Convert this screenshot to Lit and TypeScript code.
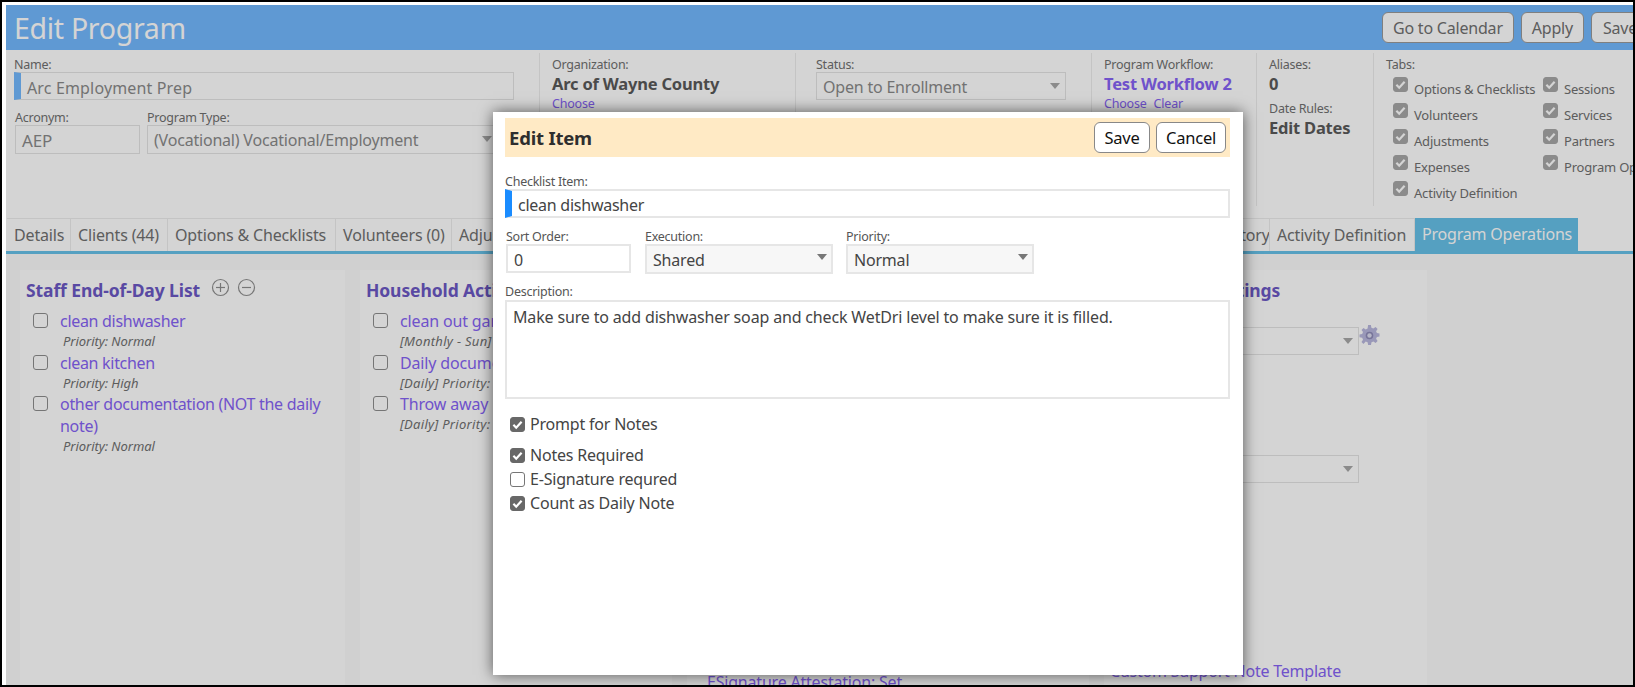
import { LitElement, html, css, svg } from 'lit';
import { customElement } from 'lit/decorators.js';

const box = (checked: boolean) => html`
    <span class="box ${checked ? 'on' : ''}">
        ${checked
            ? html`<svg viewBox="0 0 15 15" width="15" height="15"><path d="M3.4 7.8l2.8 2.9 5.4-6" fill="none" stroke="#fff" stroke-width="2.2"/></svg>`
            : ''}
    </span>
`;

const gear = svg`
    <path fill="#b9b7de" d="M8.6 0h2.8l.5 2.7 1.9.8L16.100 2l2 2-1.500 2.200.8 1.900 2.600.5v2.800l-2.600.5-.8 1.900 1.500 2.200-2 2-2.200-1.500-1.900.8-.5 2.700H8.600l-.5-2.700-1.900-.8L4 18.900l-2-2 1.500-2.200-.8-1.900-2.700-.5V9.500l2.700-.5.8-1.900L2 4.900l2-2 2.200 1.500 1.900-.8z"/>
    <circle cx="10" cy="10.500" r="3.800" fill="#8f8cb8"/>
    <circle cx="10" cy="10.500" r="2.200" fill="#dddcf0"/>
`;

const tabs = [
    ['Details', 64], ['Clients (44)', 97], ['Options & Checklists', 168], ['Volunteers (0)', 116],
    ['Adjustments (0)', 135], ['Expenses (0)', 115], ['Sessions (0)', 110], ['Services (0)', 105],
    ['Partners', 90], ['Documents (0)', 120], ['Billing', 83], ['History', 60], ['Activity Definition', 145],
] as const;

const headerTabs = [
    'Options & Checklists', 'Sessions', 'Volunteers', 'Services', 'Adjustments', 'Partners',
    'Expenses', 'Program Operations', 'Activity Definition',
];

@customElement('app-root')
export class AppRoot extends LitElement {
    static styles = css`
        :host {
            display: block;
            height: 687px;
            font-family: "Noto Sans", sans-serif;
            color: #707070;
        }
        * { box-sizing: border-box; }

        .frame {
            height: 687px;
            background: #fff;
            border: 2px solid #000;
            padding: 3px 0 0 4px;
        }
        .page {
            position: relative;
            height: 100%;
            overflow: hidden;
            background: #fff;
        }
        .scrim {
            position: absolute;
            inset: 0;
            background: rgba(0, 0, 0, .17);
        }

        .top {
            display: flex;
            align-items: center;
            height: 45px;
            padding: 0 0 0 8px;
            background: #73b8fe;
            overflow: hidden;
        }
        .top h1 {
            flex: 1;
            margin: 0;
            font-size: 28.500px;
            font-weight: 400;
            color: #fff;
            letter-spacing: -.3px;
        }
        .top button {
            flex: none;
            height: 31px;
            margin-left: 7px;
            padding: 0 10px;
            border: 1px solid #999;
            border-radius: 6px;
            background: #fff;
            color: #707070;
            font: 16px "Noto Sans", sans-serif;
            letter-spacing: -.2px;
        }
        .top .cut { margin-right: -16px; width: 58px; }

        .details {
            display: grid;
            grid-template-columns: 533px 256px 296px 165px 117px 1fr;
            height: 168px;
            padding: 3px 0 14px;
            font-size: 12.500px;
        }
        .col {
            padding: 4px 0 0 12px;
            border-left: 1px solid #ececec;
        }
        .col:first-child { padding-left: 8px; border-left: none; }
        .col.status { padding-left: 20px; }
        label {
            display: block;
            height: 15px;
            font-size: 12.500px;
            line-height: 15px;
            letter-spacing: -.25px;
        }
        .field {
            display: flex;
            align-items: center;
            height: 28px;
            border: 1px solid #e4e4e4;
            padding: 1px 0 0 6px;
            color: #8a8a8a;
            font-size: 16px;
            letter-spacing: -.2px;
            position: relative;
            white-space: nowrap;
        }
        .field.bar { border-left: 7px solid #73b8fe; padding: 3px 0 0 6px; font-size: 16px; letter-spacing: .15px; }
        .caret {
            position: absolute;
            right: 5px;
            top: 10px;
            border: 5px solid transparent;
            border-top: 6px solid #a8a8a8;
            border-bottom: none;
        }
        .sub-row { display: flex; gap: 7px; margin: 10px 0 0 1px; }
        .sub-row .field { height: 29px; }
        .field.acronym { width: 125px; font-size: 17px; }
        .ptype { width: 351px; }
        .name-input { width: 500px; }
        .status-input { width: 250px; }
        .big {
            display: block;
            height: 21px;
            font-size: 16.500px;
            font-weight: 700;
            line-height: 24px;
            color: #5a5a5a;
            letter-spacing: -.2px;
        }
        .big.link { color: #8663f5; }
        a { color: #8663f5; text-decoration: none; }
        .small-links {
            display: flex;
            gap: 7px;
            margin-top: 2px;
            font-size: 12.500px;
            letter-spacing: -.2px;
        }
        .alias-gap { margin-top: 8px; }
        .tab-checks {
            display: grid;
            grid-template-columns: 150px 150px;
            grid-auto-rows: 26px;
            margin: 4px 0 0 7px;
            overflow: hidden;
            font-size: 13px;
        }
        .tab-checks div {
            display: flex;
            gap: 6px;
            white-space: nowrap;
            line-height: 26px;
            letter-spacing: -.2px;
        }
        .tab-checks div .box.on { margin-top: 1px; background: #a8a8a8; border-color: #a8a8a8; }

        .box {
            flex: none;
            display: inline-block;
            width: 15px;
            height: 15px;
            border: 1px solid #767676;
            border-radius: 3px;
            background: #fff;
            overflow: hidden;
        }
        .box svg { display: block; margin: -1px; }
        .box.on { background: #686868; border-color: #686868; }

        .tabs {
            display: flex;
            height: 36px;
            padding-left: 1px;
            border-bottom: 3px solid #67c1e8;
        }
        .tab {
            flex: none;
            padding-left: 7px;
            border-right: 1px solid #ececec;
            border-top: 1px solid #ececec;
            font-size: 16px;
            line-height: 32px;
            letter-spacing: -.15px;
            white-space: nowrap;
            overflow: hidden;
        }
        .tab.active {
            padding: 0 6px 0 7px;
            background: #67c1e8;
            border: none;
            color: #fff;
            line-height: 33px;
            letter-spacing: -.2px;
        }

        .panels {
            display: grid;
            grid-template-columns: 325px 312px 402px 323px;
            gap: 15px;
            height: 431px;
            padding: 16px 0 0 14px;
            background: #fbfbfb;
        }
        .panel {
            padding: 10px 6px 0;
            background: #fff;
            overflow: hidden;
        }
        .panel h3 {
            margin: 0;
            display: flex;
            gap: 7px;
            height: 20px;
            font-size: 17.500px;
            line-height: 20px;
            color: #6c58c4;
            letter-spacing: -.1px;
        }
        .panel h3 svg { margin: -2px 0 0 0; flex: none; }
        .panel h3 svg:first-of-type { margin-left: 4px; }
        .items { margin-top: 10px; }
        .item { display: flex; gap: 12px; padding-left: 7px; }
        .item .box { margin-top: 3px; background: #fff; border-color: #8d8d8d; }
        .item a { display: block; font-size: 16px; line-height: 22px; letter-spacing: -.3px; }
        .item small {
            display: block;
            height: 19.500px;
            margin-left: 3px;
            font-size: 13px;
            font-style: italic;
            line-height: 19px;
            white-space: nowrap;
            letter-spacing: -.05px;
        }
        .item small.flush { margin-left: 0; letter-spacing: .3px; }
        .item.wide a { letter-spacing: -.15px; }
        .sel-row { display: flex; align-items: flex-start; margin-top: 27px; }
        .sel-row .field { width: 249px; }
        .sel-row svg { flex: none; margin: -2px 0 0 0; }
        .late { margin-top: 100px; }
        .foot-link { display: block; margin: 177px 0 0; font-size: 16px; letter-spacing: -.22px; white-space: nowrap; }
        .esign { display: block; margin: 391px 0 0 14px; font-size: 16px; line-height: 22px; letter-spacing: -.2px; }

        .modal {
            position: absolute;
            left: 487px;
            top: 107px;
            width: 750px;
            height: 563px;
            padding: 6px 13px 0 12px;
            background: #fff;
            box-shadow: 0 0 14px rgba(0, 0, 0, .6);
            color: #444;
        }
        .modal-head {
            display: flex;
            align-items: center;
            gap: 6px;
            height: 39px;
            padding: 0 4px;
            background: #ffeac5;
        }
        .modal-head h2 {
            flex: 1;
            margin: 0;
            font-size: 18.500px;
            font-weight: 700;
            color: #2e2e2e;
            letter-spacing: -.2px;
        }
        .modal-head button {
            height: 31px;
            padding: 0;
            border: 1px solid #888;
            border-radius: 6px;
            background: #fff;
            color: #111;
            font: 16.500px "Noto Sans", sans-serif;
            letter-spacing: -.2px;
        }
        .modal-head .save { width: 56px; }
        .modal-head .cancel { width: 70px; }
        .modal label { color: #555; }
        .mt17 { margin-top: 17px; }
        .mfield {
            display: block;
            width: 100%;
            height: 29px;
            margin: 0;
            padding: 2px 6px 0;
            border: 2px solid #e6e6e6;
            outline: none;
            background: #fff;
            color: #444;
            font: 16px "Noto Sans", sans-serif;
            letter-spacing: -.25px;
        }
        input.item-name { border-left: 7px solid #1a8cff; padding-left: 6px; }
        .triple { display: flex; margin: 11px 0 0 1px; }
        .triple > div { flex: none; }
        .w-sort { width: 139px; }
        .w-exec { width: 201px; }
        .w-pri { width: 188px; }
        .w-sort .mfield { width: 125px; }
        .w-exec .msel { width: 188px; }
        .msel {
            position: relative;
            height: 30px;
            padding: 1px 6px 0;
            border: 2px solid #e6e6e6;
            background: #f7f7f7;
            font-size: 16px;
            line-height: 26px;
            letter-spacing: -.2px;
        }
        .msel .caret { top: 8px; right: 4px; border-top-color: #777; }
        .modal .desc-label { margin-top: 10px; height: 16px; }
        textarea.mfield { height: 99px; padding: 4px 6px; resize: none; letter-spacing: -.16px; }
        .checks { margin: 18px 0 0 5px; }
        .check {
            display: flex;
            gap: 5px;
            height: 24px;
            font-size: 16px;
            line-height: 15px;
            letter-spacing: -.2px;
            color: #444;
        }
        .check.first { height: 31px; }
    `;

    private circleIcon(plus: boolean) {
        return html`<svg width="19" height="19" viewBox="0 0 19 19" fill="none" stroke="#8f8f8f" stroke-width="1.200">
            <circle cx="9.500" cy="9.500" r="8"/>
            <path d="M5 9.500h9"/>
            ${plus ? svg`<path d="M9.500 5v9"/>` : ''}
        </svg>`;
    }

    private item(name: string, sub: string, flush = false) {
        return html`
            <div class="item ${flush ? 'wide' : ''}">
                ${box(false)}
                <div>
                    <a href="#">${name}</a>
                    <small class=${flush ? 'flush' : ''}>${sub}</small>
                </div>
            </div>
        `;
    }

    render() {
        return html`
            <div class="frame">
                <div class="page">
                    <div class="top">
                        <h1>Edit Program</h1>
                        <button>Go to Calendar</button>
                        <button>Apply</button>
                        <button class="cut">Save</button>
                    </div>

                    <div class="details">
                        <div class="col">
                            <label>Name:</label>
                            <div class="field bar name-input">Arc Employment Prep</div>
                            <div class="sub-row">
                                <div>
                                    <label>Acronym:</label>
                                    <div class="field acronym">AEP</div>
                                </div>
                                <div>
                                    <label>Program Type:</label>
                                    <div class="field ptype">(Vocational) Vocational/Employment<span class="caret"></span></div>
                                </div>
                            </div>
                        </div>
                        <div class="col">
                            <label>Organization:</label>
                            <span class="big">Arc of Wayne County</span>
                            <div class="small-links"><a href="#">Choose</a></div>
                        </div>
                        <div class="col status">
                            <label>Status:</label>
                            <div class="field status-input">Open to Enrollment<span class="caret"></span></div>
                        </div>
                        <div class="col">
                            <label>Program Workflow:</label>
                            <span class="big link">Test Workflow 2</span>
                            <div class="small-links"><a href="#">Choose</a><a href="#">Clear</a></div>
                        </div>
                        <div class="col">
                            <label>Aliases:</label>
                            <span class="big">0</span>
                            <label class="alias-gap">Date Rules:</label>
                            <span class="big">Edit Dates</span>
                        </div>
                        <div class="col">
                            <label>Tabs:</label>
                            <div class="tab-checks">
                                ${headerTabs.map((t) => html`<div>${box(true)}<span>${t}</span></div>`)}
                            </div>
                        </div>
                    </div>

                    <div class="tabs">
                        ${tabs.map(([t, w]) => html`<div class="tab" style="width:${w}px">${t}</div>`)}
                        <div class="tab active">Program Operations</div>
                    </div>

                    <div class="panels">
                        <div class="panel">
                            <h3>Staff End-of-Day List ${this.circleIcon(true)} ${this.circleIcon(false)}</h3>
                            <div class="items">
                                ${this.item('clean dishwasher', 'Priority: Normal')}
                                ${this.item('clean kitchen', 'Priority: High')}
                                ${this.item('other documentation (NOT the daily note)', 'Priority: Normal')}
                            </div>
                        </div>
                        <div class="panel">
                            <h3>Household Activities</h3>
                            <div class="items">
                                ${this.item('clean out garage', '[Monthly - Sun] Priority: Normal', true)}
                                ${this.item('Daily documentation', '[Daily] Priority: Normal', true)}
                                ${this.item('Throw away', '[Daily] Priority: Normal', true)}
                            </div>
                        </div>
                        <div class="panel">
                            <a class="esign" href="#">ESignature Attestation: Set</a>
                        </div>
                        <div class="panel">
                            <h3>Scheduling Settings</h3>
                            <div class="sel-row">
                                <div class="field"><span class="caret"></span></div>
                                <svg width="21" height="21" viewBox="0 0 20 21">${gear}</svg>
                            </div>
                            <div class="sel-row late">
                                <div class="field"><span class="caret"></span></div>
                            </div>
                            <a class="foot-link" href="#">Custom Support Note Template</a>
                        </div>
                    </div>

                    <div class="scrim"></div>

                    <div class="modal">
                        <div class="modal-head">
                            <h2>Edit Item</h2>
                            <button class="save">Save</button>
                            <button class="cancel">Cancel</button>
                        </div>
                        <label class="mt17">Checklist Item:</label>
                        <input class="mfield item-name" .value=${'clean dishwasher'} />
                        <div class="triple">
                            <div class="w-sort">
                                <label>Sort Order:</label>
                                <input class="mfield" .value=${'0'} />
                            </div>
                            <div class="w-exec">
                                <label>Execution:</label>
                                <div class="msel">Shared<span class="caret"></span></div>
                            </div>
                            <div class="w-pri">
                                <label>Priority:</label>
                                <div class="msel">Normal<span class="caret"></span></div>
                            </div>
                        </div>
                        <label class="desc-label">Description:</label>
                        <textarea class="mfield" .value=${'Make sure to add dishwasher soap and check WetDri level to make sure it is filled.'}></textarea>
                        <div class="checks">
                            <div class="check first">${box(true)}<span>Prompt for Notes</span></div>
                            <div class="check">${box(true)}<span>Notes Required</span></div>
                            <div class="check">${box(false)}<span>E-Signature requred</span></div>
                            <div class="check">${box(true)}<span>Count as Daily Note</span></div>
                        </div>
                    </div>
                </div>
            </div>
        `;
    }
}
